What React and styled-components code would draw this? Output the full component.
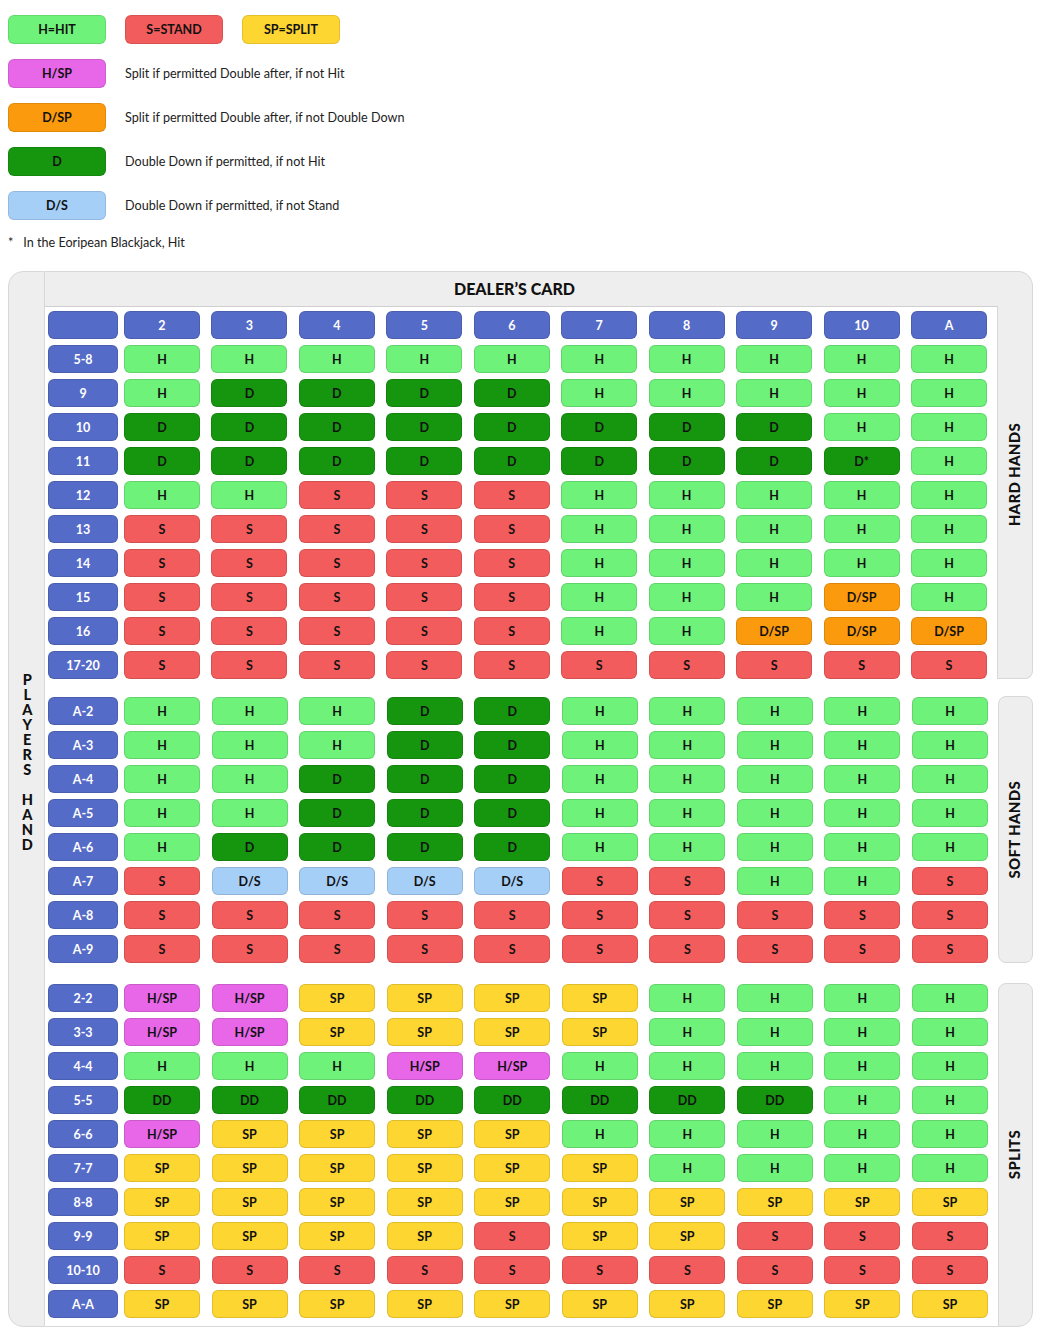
import React from "react";
import styled, { createGlobalStyle } from "styled-components";

const GlobalStyle = createGlobalStyle`
  html, body { margin: 0; padding: 0; background: #ffffff; }
  body { font-family: Lato, "Open Sans", "Liberation Sans", sans-serif; color: #111; }
  * { box-sizing: border-box; }
`;

const COLORS = {
  H: "#6ef27a",
  D: "#16960f",
  "D*": "#16960f",
  DD: "#16960f",
  S: "#f25c5c",
  SP: "#fdd631",
  "H/SP": "#e767e8",
  "D/SP": "#fb9a0c",
  "D/S": "#a6cff8",
};

const BLUE = "#556bc8";
const GREY = "#eeeeee";
const LINE = "#d8d8d8";

const Page = styled.div`
  width: 1050px;
  padding: 15px 17px 16px 8px;
`;

const Legend = styled.div`
  display: flex;
  flex-direction: column;
  gap: 15px;
`;

const LegendRow = styled.div`
  display: flex;
  align-items: center;
  gap: 19px;
`;

const Chip = styled.div`
  width: 98px;
  height: 29px;
  border-radius: 6px;
  border: 1px solid rgba(0, 0, 0, 0.1);
  background: ${(p) => p.$bg};
  display: flex;
  align-items: center;
  justify-content: center;
  font-size: 12.5px;
  font-weight: 700;
  color: #111;
`;

const LegendText = styled.span`
  font-size: 12.6px;
  color: #222;
`;

const Footnote = styled.div`
  display: flex;
  gap: 10px;
  font-size: 12.6px;
  line-height: 15px;
  color: #222;
  margin-bottom: 21px;
`;

const Chart = styled.div`
  display: grid;
  grid-template-columns: 37px 953px 35px;
  grid-template-areas:
    "left head right1"
    "left hard right1"
    "left soft right2"
    "left split right3";
`;

const LeftStrip = styled.div`
  grid-area: left;
  background: ${GREY};
  border: 1px solid ${LINE};
  border-radius: 15px 0 0 15px;
  display: flex;
  flex-direction: column;
  align-items: center;
  padding-top: 399px;
`;

const VerticalTitle = styled.span`
  writing-mode: vertical-lr;
  text-orientation: upright;
  font-size: 14.5px;
  font-weight: 900;
  line-height: 1;
  letter-spacing: -2px;
  color: #111;
`;

const Head = styled.div`
  grid-area: head;
  background: ${GREY};
  border-top: 1px solid ${LINE};
  border-bottom: 1px solid #cfcfcf;
  height: 36px;
  display: flex;
  align-items: center;
  justify-content: center;
  padding-right: 14px;
  padding-bottom: 2px;
  font-size: 16px;
  font-weight: 900;
  color: #111;
`;

const Section = styled.div`
  grid-area: ${(p) => p.$area};
  background: #ffffff;
  display: flex;
  flex-direction: column;
  gap: 6px;
  padding: ${(p) => p.$pt}px 10px ${(p) => p.$pb}px 3px;
  border-right: ${(p) => (p.$edge ? `1px solid ${LINE}` : "none")};
  border-bottom: ${(p) => (p.$bottom ? `1px solid ${LINE}` : "none")};
`;

const Side = styled.div`
  grid-area: ${(p) => p.$area};
  margin-top: ${(p) => p.$mt}px;
  background: ${GREY};
  border: 1px solid ${LINE};
  border-left: ${(p) => (p.$noLeft ? "none" : `1px solid ${LINE}`)};
  border-radius: ${(p) => p.$radius};
  display: flex;
  align-items: center;
  justify-content: center;
`;

const SideText = styled.span`
  writing-mode: vertical-rl;
  transform: rotate(180deg);
  font-size: 15px;
  font-weight: 900;
  letter-spacing: 0.3px;
  color: #111;
  margin-right: 3px;
`;

const Row = styled.div`
  display: grid;
  grid-template-columns: 70px 1fr;
  column-gap: 6px;
`;

const Cells = styled.div`
  display: grid;
  grid-template-columns: repeat(10, 1fr);
  column-gap: 11.5px;
`;

const Label = styled.div`
  height: 28px;
  border-radius: 6px;
  background: ${BLUE};
  border: 1px solid rgba(0, 0, 0, 0.12);
  color: #ffffff;
  font-size: 12.5px;
  font-weight: 700;
  display: flex;
  align-items: center;
  justify-content: center;
`;

const Cell = styled.div`
  height: 28px;
  border-radius: 6px;
  background: ${(p) => p.$bg};
  border: 1px solid rgba(0, 0, 0, 0.12);
  color: #111;
  font-size: 12.5px;
  font-weight: 700;
  display: flex;
  align-items: center;
  justify-content: center;
`;

const DEALER = ["2", "3", "4", "5", "6", "7", "8", "9", "10", "A"];

const r = (s) => s.split(" ");
const all = (v) => Array(10).fill(v);

const HARD = [
  ["5-8", all("H")],
  ["9", r("H D D D D H H H H H")],
  ["10", r("D D D D D D D D H H")],
  ["11", r("D D D D D D D D D* H")],
  ["12", r("H H S S S H H H H H")],
  ["13", r("S S S S S H H H H H")],
  ["14", r("S S S S S H H H H H")],
  ["15", r("S S S S S H H H D/SP H")],
  ["16", r("S S S S S H H D/SP D/SP D/SP")],
  ["17-20", all("S")],
];

const SOFT = [
  ["A-2", r("H H H D D H H H H H")],
  ["A-3", r("H H H D D H H H H H")],
  ["A-4", r("H H D D D H H H H H")],
  ["A-5", r("H H D D D H H H H H")],
  ["A-6", r("H D D D D H H H H H")],
  ["A-7", r("S D/S D/S D/S D/S S S H H S")],
  ["A-8", all("S")],
  ["A-9", all("S")],
];

const SPLITS = [
  ["2-2", r("H/SP H/SP SP SP SP SP H H H H")],
  ["3-3", r("H/SP H/SP SP SP SP SP H H H H")],
  ["4-4", r("H H H H/SP H/SP H H H H H")],
  ["5-5", r("DD DD DD DD DD DD DD DD H H")],
  ["6-6", r("H/SP SP SP SP SP H H H H H")],
  ["7-7", r("SP SP SP SP SP SP H H H H")],
  ["8-8", all("SP")],
  ["9-9", r("SP SP SP SP S SP SP S S S")],
  ["10-10", all("S")],
  ["A-A", all("SP")],
];

const LEGEND = [
  ["H/SP", "Split if permitted Double after, if not Hit"],
  ["D/SP", "Split if permitted Double after, if not Double Down"],
  ["D", "Double Down if permitted, if not Hit"],
  ["D/S", "Double Down if permitted, if not Stand"],
];

function HandRow({ label, values }) {
  return (
    <Row>
      <Label>{label}</Label>
      <Cells>
        {values.map((v, i) => (
          <Cell key={i} $bg={COLORS[v]}>
            {v}
          </Cell>
        ))}
      </Cells>
    </Row>
  );
}

export default function App() {
  return (
    <Page>
      <GlobalStyle />
      <Legend>
        <LegendRow>
          <Chip $bg={COLORS.H}>H=HIT</Chip>
          <Chip $bg={COLORS.S}>S=STAND</Chip>
          <Chip $bg={COLORS.SP}>SP=SPLIT</Chip>
        </LegendRow>
        {LEGEND.map(([k, t]) => (
          <LegendRow key={k}>
            <Chip $bg={COLORS[k]}>{k}</Chip>
            <LegendText>{t}</LegendText>
          </LegendRow>
        ))}
        <Footnote>
          <span>*</span>
          <span>In the Eoripean Blackjack, Hit</span>
        </Footnote>
      </Legend>

      <Chart>
        <LeftStrip>
          <VerticalTitle>PLAYERS HAND</VerticalTitle>
        </LeftStrip>
        <Head>DEALER’S CARD</Head>
        <Section $area="hard" $pt={4} $pb={0} $edge>
          <Row>
            <Label />
            <Cells>
              {DEALER.map((d) => (
                <Label key={d}>{d}</Label>
              ))}
            </Cells>
          </Row>
          {HARD.map(([l, v]) => (
            <HandRow key={l} label={l} values={v} />
          ))}
        </Section>
        <Section $area="soft" $pt={18} $pb={0}>
          {SOFT.map(([l, v]) => (
            <HandRow key={l} label={l} values={v} />
          ))}
        </Section>
        <Section $area="split" $pt={21} $pb={8} $bottom>
          {SPLITS.map(([l, v]) => (
            <HandRow key={l} label={l} values={v} />
          ))}
        </Section>
        <Side $area="right1" $mt={0} $noLeft $radius="0 15px 8px 0">
          <SideText>HARD HANDS</SideText>
        </Side>
        <Side $area="right2" $mt={17} $radius="8px">
          <SideText>SOFT HANDS</SideText>
        </Side>
        <Side $area="right3" $mt={20} $radius="8px 8px 15px 0">
          <SideText>SPLITS</SideText>
        </Side>
      </Chart>
    </Page>
  );
}
